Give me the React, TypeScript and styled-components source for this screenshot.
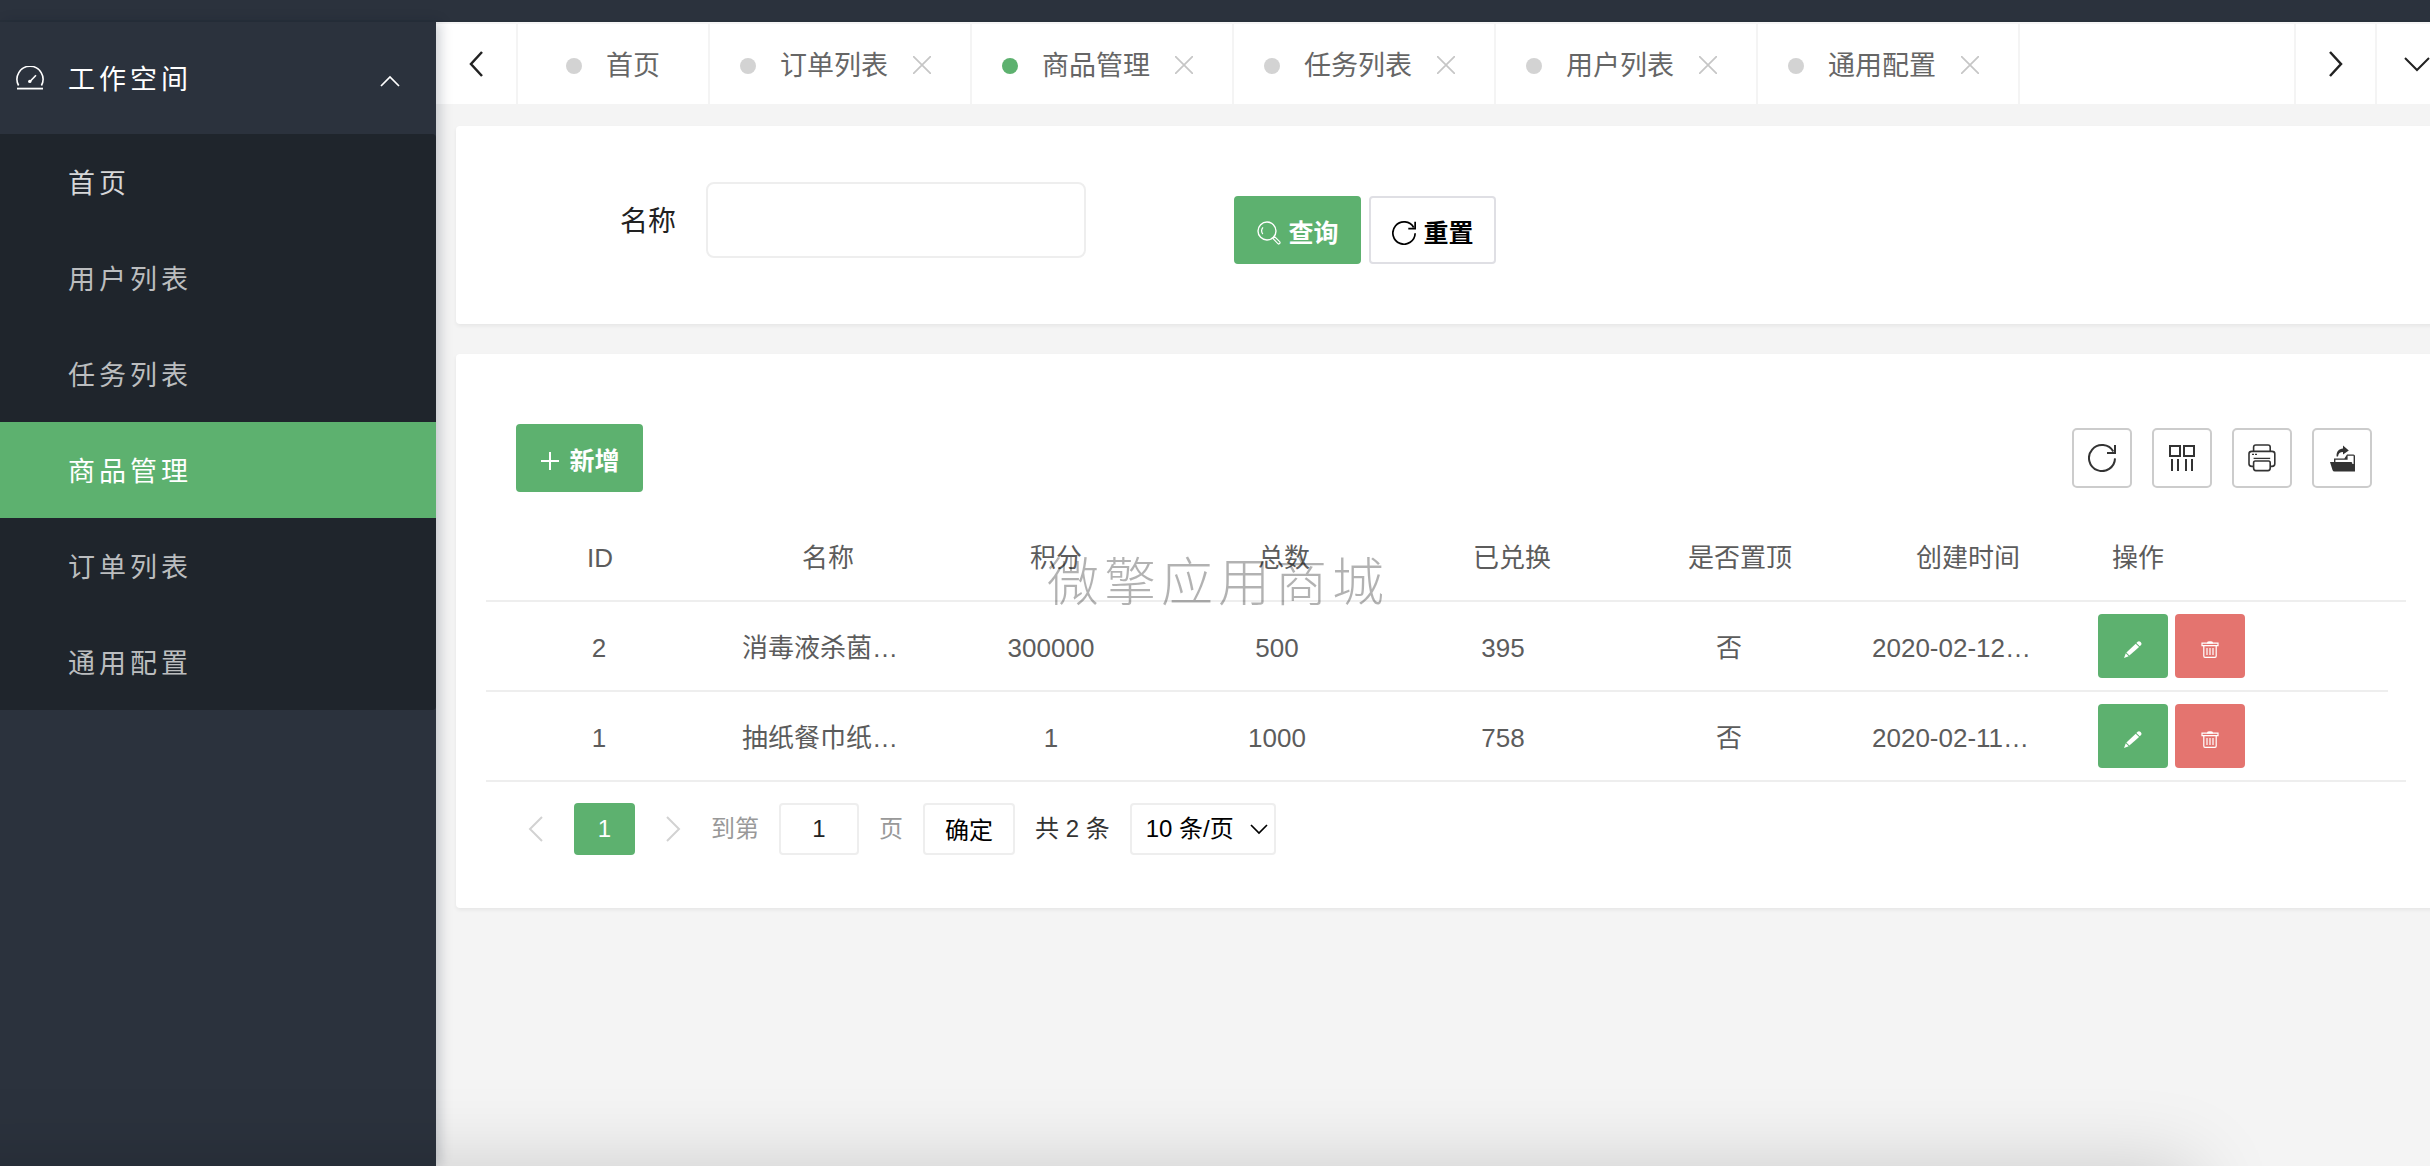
import React from "react";
import styled, { createGlobalStyle, css } from "styled-components";

const color = {
  dark: "#2b323d",
  darker: "#1f252c",
  green: "#5db16f",
  red: "#e4746f",
  page: "#f4f4f4",
  line: "#eeeeee",
  text: "#5c5c5c",
};

const GlobalStyle = createGlobalStyle`
  *, *::before, *::after { box-sizing: border-box; }
  body {
    margin: 0;
    background: ${color.page};
    color: ${color.text};
    font: 400 26px/36px "Liberation Sans", "Noto Sans CJK SC", sans-serif;
  }
  button, input, select { font: inherit; }
  button { margin: 0; padding: 0; border: 0; background: none; cursor: pointer; }
`;

/* ---------- shell ---------- */

const Shell = styled.div`
  display: flex;
  flex-direction: column;
  min-height: 100vh;
  overflow: hidden;
`;

const TopBar = styled.header`
  height: 22px;
  background: ${color.dark};
  border-bottom: 2px solid #28303a;
`;

const Body = styled.div`
  display: flex;
  flex: 1;
`;

const Sidebar = styled.aside`
  flex: none;
  width: 436px;
  background: ${color.dark};
  box-shadow: 4px 0 12px rgba(0, 21, 41, 0.2);
  z-index: 1;
  font-size: 27px;
  letter-spacing: 4px;
`;

const MenuHead = styled.button`
  display: flex;
  align-items: center;
  width: 100%;
  height: 112px;
  padding: 0 36px 0 16px;
  color: #fff;
  letter-spacing: inherit;
  text-align: left;
`;

const MenuTitle = styled.span`
  flex: 1;
  margin-left: 24px;
  padding-top: 3px;
`;

const MenuArrow = styled.span`
  display: flex;
  padding-top: 6px;
`;

const MenuList = styled.nav`
  display: flex;
  flex-direction: column;
  background: ${color.darker};
  border-radius: 0 4px 4px 0;
`;

const MenuLink = styled.a<{ $active?: boolean; $bright?: boolean }>`
  display: flex;
  align-items: center;
  height: 96px;
  padding: 3px 0 0 68px;
  text-decoration: none;
  color: ${(p) => (p.$active ? "#fff" : p.$bright ? "#d6d7d8" : "#bbbdbf")};
  background: ${(p) => (p.$active ? color.green : "transparent")};
`;

/* The workspace runs a little past the right edge of the window. */
const Main = styled.main`
  flex: 1;
  min-width: 0;
  margin-right: -26px;
`;

/* ---------- tabs ---------- */

const TabBar = styled.div`
  display: flex;
  height: 82px;
  background: #fff;
  border-top: 2px solid #f5f5f5;
`;

const TabControl = styled.button<{ $side?: "left" | "right" }>`
  display: flex;
  align-items: center;
  justify-content: center;
  flex: none;
  width: ${(p) => (p.$side === "left" ? 82 : 81)}px;
  color: #222;
  ${(p) =>
    p.$side === "left"
      ? css`border-right: 2px solid #f4f4f4;`
      : css`border-left: 2px solid #f4f4f4;`}
`;

const TabList = styled.div`
  display: flex;
  flex: 1;
  min-width: 0;
`;

const Tab = styled.div<{ $home?: boolean }>`
  display: flex;
  align-items: center;
  padding: 0 ${(p) => (p.$home ? 48 : 39)}px 0 ${(p) => (p.$home ? 48 : 30)}px;
  border-right: 2px solid #f4f4f4;
  font-size: 27px;
  color: #666;
`;

const TabLabel = styled.span`
  padding-top: 3px;
`;

const Dot = styled.span<{ $active?: boolean }>`
  width: 16px;
  height: 16px;
  margin: 4px 24px 0 0;
  border-radius: 50%;
  background: ${(p) => (p.$active ? color.green : "#d3d3d3")};
`;

const TabClose = styled.button`
  display: flex;
  margin: 2px 0 0 25px;
  color: #c6c6c6;
`;

/* ---------- cards and buttons ---------- */

const Cards = styled.div`
  display: flex;
  flex-direction: column;
  gap: 30px;
  padding: 22px 20px;
`;

const Card = styled.section`
  background: #fff;
  border-radius: 4px;
  box-shadow: 0 2px 4px rgba(0, 0, 0, 0.06);
`;

const SearchForm = styled.form`
  display: flex;
  align-items: flex-start;
  padding: 56px 60px 60px 164px;
`;

const FieldLabel = styled.label`
  margin-right: 30px;
  padding-top: 2px;
  font-size: 28px;
  line-height: 76px;
  color: #222;
`;

const TextInput = styled.input`
  width: 380px;
  height: 76px;
  padding: 0 20px;
  border: 2px solid ${color.line};
  border-radius: 8px;
  background: #fff;
`;

const FormActions = styled.div`
  display: flex;
  gap: 8px;
  margin: 14px 0 0 148px;
`;

const Button = styled.button<{ $plain?: boolean }>`
  display: flex;
  align-items: center;
  justify-content: center;
  gap: 8px;
  width: 127px;
  height: 68px;
  padding-top: 6px;
  border: 2px solid ${(p) => (p.$plain ? "#dfdfe4" : color.green)};
  border-radius: 4px;
  background: ${(p) => (p.$plain ? "#fff" : color.green)};
  color: ${(p) => (p.$plain ? "#000" : "#fff")};
  font-size: 25px;
  font-weight: 700;
`;

const Toolbar = styled.div`
  display: flex;
  align-items: center;
  justify-content: space-between;
  padding: 70px 64px 20px 60px;
`;

const ToolGroup = styled.div`
  display: flex;
  gap: 20px;
`;

const ToolButton = styled.button`
  display: flex;
  align-items: center;
  justify-content: center;
  width: 60px;
  height: 60px;
  border: 2px solid #ccc;
  border-radius: 5px;
  color: #333;
`;

/* ---------- table ---------- */

const TableArea = styled.div`
  margin: 0 30px;
  border-bottom: 2px solid ${color.line};
`;

const Table = styled.table<{ $scrollGap?: boolean }>`
  width: ${(p) => (p.$scrollGap ? "calc(100% - 18px)" : "100%")};
  table-layout: fixed;
  border-collapse: separate;
  border-spacing: 0;
  text-align: center;

  tbody tr:last-child td {
    height: 88px;
    border-bottom: 0;
  }
`;

const ActionCol = styled.col<{ $width: number }>`
  width: ${(p) => p.$width}px;
`;

const cell = css`
  height: 90px;
  padding: 3px 30px 0;
  border-bottom: 2px solid ${color.line};
  font-weight: 400;
  white-space: nowrap;
`;

const HeadCell = styled.th<{ $start?: boolean }>`
  ${cell}
  text-align: ${(p) => (p.$start ? "left" : "center")};
`;

const Cell = styled.td<{ $start?: boolean }>`
  ${cell}
  text-align: ${(p) => (p.$start ? "left" : "center")};
`;

const ActionCell = styled(Cell)`
  padding-top: 0;
`;

const RowActions = styled.div`
  display: flex;
  gap: 7px;
`;

const RowButton = styled.button<{ $danger?: boolean }>`
  display: flex;
  align-items: center;
  justify-content: center;
  width: 70px;
  height: 64px;
  padding-top: 6px;
  border-radius: 4px;
  color: #fff;
  background: ${(p) => (p.$danger ? color.red : color.green)};
`;

/* ---------- pager ---------- */

const Pager = styled.div`
  display: flex;
  align-items: center;
  padding: 21px 42px 53px;
  font-size: 24px;
  color: #333;
`;

const PagerArrow = styled.button`
  display: flex;
  align-items: center;
  justify-content: center;
  width: 76px;
  height: 52px;
  color: #d2d2d2;
`;

const PagerCurrent = styled.button`
  width: 61px;
  height: 52px;
  border-radius: 4px;
  background: ${color.green};
  color: #fff;
`;

const PagerForm = styled.form`
  display: flex;
  align-items: center;
  gap: 20px;
`;

const PagerHint = styled.label`
  color: #999;
`;

const PageInput = styled.input`
  width: 80px;
  height: 52px;
  padding: 0;
  border: 2px solid ${color.line};
  border-radius: 4px;
  background: #fff;
  color: #222;
  text-align: center;
`;

const PagerGo = styled.button`
  width: 92px;
  height: 52px;
  padding-top: 3px;
  border: 2px solid ${color.line};
  border-radius: 4px;
  background: #fff;
  color: #000;
`;

const SelectWrap = styled.div`
  position: relative;
  display: flex;
`;

const SizeSelect = styled.select`
  appearance: none;
  width: 146px;
  height: 52px;
  padding: 0 0 0 14px;
  border: 2px solid ${color.line};
  border-radius: 4px;
  background: #fff;
  color: #000;
`;

const SelectArrow = styled.span`
  position: absolute;
  top: 21px;
  right: 8px;
  display: flex;
  color: #000;
  pointer-events: none;
`;

/* ---------- overlays ---------- */

const Watermark = styled.div`
  position: fixed;
  top: 50%;
  left: 50%;
  z-index: 3;
  transform: translate(-50%, -50%);
  padding-left: 6px;
  font-size: 52px;
  font-weight: 300;
  line-height: 76px;
  letter-spacing: 5px;
  white-space: nowrap;
  color: rgba(0, 0, 0, 0.3);
  pointer-events: none;
`;

const BottomShade = styled.div`
  position: fixed;
  top: 100%;
  left: -80px;
  right: 235px;
  z-index: 2;
  height: 200px;
  box-shadow: 0 0 80px rgba(0, 0, 0, 0.17);
  pointer-events: none;
`;

/* ---------- icons ---------- */

type LineIconProps = {
  w: number;
  h: number;
  d: string;
  stroke?: number;
};

const LineIcon = ({ w, h, d, stroke = 2 }: LineIconProps) => (
  <svg
    width={w}
    height={h}
    viewBox={`0 0 ${w} ${h}`}
    fill="none"
    stroke="currentColor"
    strokeWidth={stroke}
    aria-hidden="true"
  >
    <path d={d} />
  </svg>
);

const GaugeIcon = () => (
  <svg width="28" height="24" viewBox="0 0 28 24" fill="none" stroke="currentColor" aria-hidden="true">
    <path d="M2.6 19.5A13 13 0 1 1 25.4 19.5" strokeWidth="1.6" />
    <path d="M1 22.6H27" strokeWidth="1.8" />
    <path d="M14 15.5L20 9.2" strokeWidth="1.6" />
    <circle cx="13.8" cy="15.4" r="1.7" fill="currentColor" stroke="none" />
  </svg>
);

const SearchIcon = () => (
  <svg width="24" height="24" viewBox="0 0 24 24" fill="none" stroke="currentColor" aria-hidden="true">
    <circle cx="10" cy="10" r="9" strokeWidth="1.4" />
    <path d="M5.8 13.2A5.6 5.6 0 0 1 6 6.4" strokeWidth="1.2" />
    <path d="M16 17.6L17.8 15.9L22.6 20.6A1.3 1.3 0 0 1 20.9 22.6Z" strokeWidth="1.2" />
  </svg>
);

const RefreshIcon = ({ size = 28 }: { size?: number }) => (
  <svg width={size} height={size} viewBox="0 0 28 28" fill="none" stroke="currentColor" strokeWidth="2" aria-hidden="true">
    <path d="M27 14.4A13 13 0 1 1 25.3 7.6" />
    <path d="M27 1V9H19" />
  </svg>
);

const ColumnsIcon = () => (
  <svg width="26" height="27" viewBox="0 0 26 27" fill="none" stroke="currentColor" strokeWidth="2" aria-hidden="true">
    <path d="M1 1H11V11H1ZM15 1H25V11H15Z" />
    <path d="M3 14V26M9 14V26M17 14V26M23 14V26" />
  </svg>
);

const PrinterIcon = () => (
  <svg width="28" height="28" viewBox="0 0 28 28" fill="none" stroke="currentColor" strokeWidth="1.6" aria-hidden="true">
    <path d="M5.6 7.4V3.2Q5.6 1 7.8 1H20Q22.2 1 22.2 3.2V7.4" />
    <path d="M5.6 22.4H3.8Q1 22.4 1 19.8V9.8Q1 7.4 3.8 7.4H24Q26.8 7.4 26.8 9.8V19.8Q26.8 22.4 24 22.4H22.2" />
    <path d="M5.6 14.4H22.2" strokeWidth="1.3" />
    <path d="M4 10.4H6M7 10.4H9" strokeWidth="1.2" />
    <path d="M7.2 17H20.6Q22.2 17 22.2 19V24Q22.2 26.6 20 26.6H7.8Q5.6 26.6 5.6 24V19Q5.6 17 7.2 17Z" />
  </svg>
);

const ExportIcon = () => (
  <svg width="25" height="27" viewBox="0 0 25 27" fill="currentColor" aria-hidden="true">
    <path d="M0 17H4V13.4H14.4L17 9.4H23.4Q25 9.4 25 11V26.6H4.6Q3 26.6 2.5 25ZM5.4 17H21.2Q22.4 17 22.4 19H23.6V10.8H17.6V14.8H5.4Z" fillRule="evenodd" />
    <path d="M6.6 11.6C6.2 6.4 9 3.6 13 3.4V0.6L18.8 5.4L13 9.6V7C10 7 8.4 8.4 8 11.6Z" />
  </svg>
);

const PencilIcon = () => (
  <svg width="18" height="17" viewBox="0 0 18 17" fill="currentColor" aria-hidden="true">
    <path d="M13.6 0.8Q15 -0.4 16.6 1Q18.2 2.6 17 4L15.8 5.2L12.4 2Z" />
    <path d="M11.7 2.7L15.1 5.9L5.4 14.6L2.4 11.6Z" />
    <path d="M1.8 12.3L4.7 15.2L0 17Z" />
  </svg>
);

const TrashIcon = () => (
  <svg width="18" height="17" viewBox="0 0 18 17" fill="none" stroke="currentColor" aria-hidden="true">
    <path d="M1 2.2H17V4.6H1Z" strokeWidth="1.2" />
    <path d="M6 1.4Q6 0.2 9 0.2T12 1.4V2.4H6Z" fill="currentColor" stroke="none" />
    <path d="M2.8 4.8V15Q2.8 16.3 4 16.3H14Q15.2 16.3 15.2 15V4.8" strokeWidth="1.2" />
    <path d="M6 7V14M9 7V14M12 7V14" strokeWidth="1.2" />
  </svg>
);

/* ---------- data ---------- */

const menu = ["首页", "用户列表", "任务列表", "商品管理", "订单列表", "通用配置"];
const tabs = ["首页", "订单列表", "商品管理", "任务列表", "用户列表", "通用配置"];
const current = "商品管理";

const columns = ["ID", "名称", "积分", "总数", "已兑换", "是否置顶", "创建时间"];
const rows = [
  { id: 2, name: "消毒液杀菌…", points: 300000, total: 500, used: 395, top: "否", created: "2020-02-12…" },
  { id: 1, name: "抽纸餐巾纸…", points: 1, total: 1000, used: 758, top: "否", created: "2020-02-11…" },
];

const ColumnWidths = ({ action }: { action: number }) => (
  <colgroup>
    {columns.map((c) => (
      <col key={c} />
    ))}
    <ActionCol $width={action} />
  </colgroup>
);

export default function App() {
  const stay = (e: React.FormEvent) => e.preventDefault();

  return (
    <>
      <GlobalStyle />
      <Shell>
        <TopBar />
        <Body>
          <Sidebar>
            <MenuHead type="button" aria-expanded="true">
              <GaugeIcon />
              <MenuTitle>工作空间</MenuTitle>
              <MenuArrow>
                <LineIcon w={20} h={12} d="M1 11L10 2L19 11" stroke={1.7} />
              </MenuArrow>
            </MenuHead>
            <MenuList>
              {menu.map((name, i) => (
                <MenuLink key={name} href="#" $active={name === current} $bright={i === 0}>
                  {name}
                </MenuLink>
              ))}
            </MenuList>
          </Sidebar>

          <Main>
            <TabBar>
              <TabControl type="button" $side="left" aria-label="向左">
                <LineIcon w={16} h={26} d="M14 1L3 13L14 25" stroke={2.5} />
              </TabControl>
              <TabList>
                {tabs.map((name, i) => (
                  <Tab key={name} $home={i === 0}>
                    <Dot $active={name === current} />
                    <TabLabel>{name}</TabLabel>
                    {i > 0 && (
                      <TabClose type="button" aria-label={`关闭${name}`}>
                        <LineIcon w={18} h={18} d="M0 0L18 18M18 0L0 18" stroke={1.7} />
                      </TabClose>
                    )}
                  </Tab>
                ))}
              </TabList>
              <TabControl type="button" $side="right" aria-label="向右">
                <LineIcon w={16} h={26} d="M2 1L13 13L2 25" stroke={2.5} />
              </TabControl>
              <TabControl type="button" $side="right" aria-label="更多">
                <LineIcon w={26} h={16} d="M1 2L13 14L25 2" />
              </TabControl>
            </TabBar>

            <Cards>
              <Card>
                <SearchForm onSubmit={stay}>
                  <FieldLabel htmlFor="goods-name">名称</FieldLabel>
                  <TextInput id="goods-name" type="text" />
                  <FormActions>
                    <Button type="submit">
                      <SearchIcon />
                      查询
                    </Button>
                    <Button type="reset" $plain>
                      <RefreshIcon size={24} />
                      重置
                    </Button>
                  </FormActions>
                </SearchForm>
              </Card>

              <Card>
                <Toolbar>
                  <Button type="button">
                    <LineIcon w={22} h={22} d="M11 2V20M2 11H20" />
                    新增
                  </Button>
                  <ToolGroup>
                    <ToolButton type="button" aria-label="刷新">
                      <RefreshIcon />
                    </ToolButton>
                    <ToolButton type="button" aria-label="筛选列">
                      <ColumnsIcon />
                    </ToolButton>
                    <ToolButton type="button" aria-label="打印">
                      <PrinterIcon />
                    </ToolButton>
                    <ToolButton type="button" aria-label="导出">
                      <ExportIcon />
                    </ToolButton>
                  </ToolGroup>
                </Toolbar>

                <TableArea>
                  <Table>
                    <ColumnWidths action={324} />
                    <thead>
                      <tr>
                        {columns.map((c) => (
                          <HeadCell key={c} scope="col">
                            {c}
                          </HeadCell>
                        ))}
                        <HeadCell scope="col" $start>
                          操作
                        </HeadCell>
                      </tr>
                    </thead>
                  </Table>
                  <Table $scrollGap>
                    <ColumnWidths action={320} />
                    <tbody>
                      {rows.map((r) => (
                        <tr key={r.id}>
                          <Cell>{r.id}</Cell>
                          <Cell $start>{r.name}</Cell>
                          <Cell>{r.points}</Cell>
                          <Cell>{r.total}</Cell>
                          <Cell>{r.used}</Cell>
                          <Cell>{r.top}</Cell>
                          <Cell $start>{r.created}</Cell>
                          <ActionCell $start>
                            <RowActions>
                              <RowButton type="button" aria-label="编辑">
                                <PencilIcon />
                              </RowButton>
                              <RowButton type="button" aria-label="删除" $danger>
                                <TrashIcon />
                              </RowButton>
                            </RowActions>
                          </ActionCell>
                        </tr>
                      ))}
                    </tbody>
                  </Table>
                </TableArea>

                <Pager>
                  <PagerArrow type="button" aria-label="上一页">
                    <LineIcon w={16} h={26} d="M14 1L2 13L14 25" />
                  </PagerArrow>
                  <PagerCurrent type="button">1</PagerCurrent>
                  <PagerArrow type="button" aria-label="下一页">
                    <LineIcon w={16} h={26} d="M2 1L14 13L2 25" />
                  </PagerArrow>
                  <PagerForm onSubmit={stay}>
                    <PagerHint htmlFor="page-no">到第</PagerHint>
                    <PageInput id="page-no" type="text" defaultValue="1" />
                    <PagerHint htmlFor="page-no">页</PagerHint>
                    <PagerGo type="submit">确定</PagerGo>
                    <span>共 2 条</span>
                    <SelectWrap>
                      <SizeSelect aria-label="每页条数" defaultValue="10">
                        <option value="10">10 条/页</option>
                      </SizeSelect>
                      <SelectArrow>
                        <LineIcon w={18} h={11} d="M1 1L9 9L17 1" stroke={1.7} />
                      </SelectArrow>
                    </SelectWrap>
                  </PagerForm>
                </Pager>
              </Card>
            </Cards>
          </Main>
        </Body>
      </Shell>
      <BottomShade />
      <Watermark>微擎应用商城</Watermark>
    </>
  );
}
